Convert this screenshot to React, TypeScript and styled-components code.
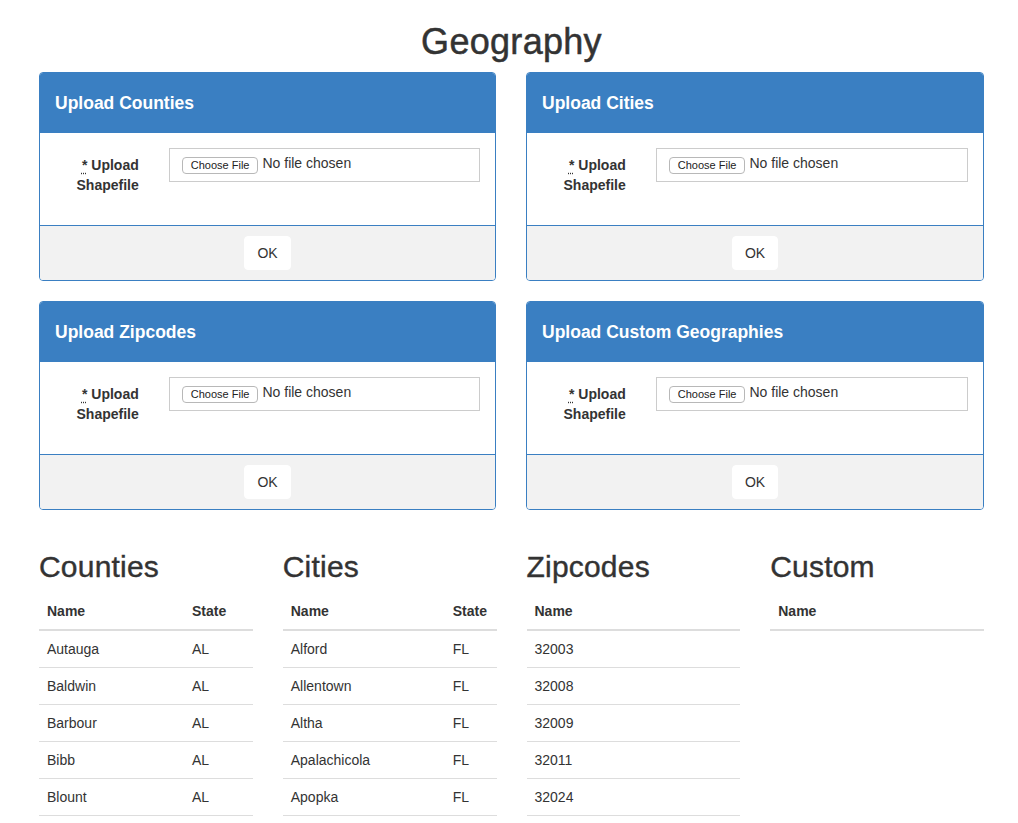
import React from "react";
import styled, { createGlobalStyle } from "styled-components";

const GlobalStyle = createGlobalStyle`
  html, body {
    margin: 0;
    padding: 0;
    background: #ffffff;
  }
  body {
    font-family: "Liberation Sans", Helvetica, Arial, sans-serif;
    font-size: 14px;
    line-height: 20px;
    color: #333333;
  }
  * { box-sizing: border-box; }
`;

const Page = styled.div`
  width: 945px;
  margin-left: 39px;
`;

const Title = styled.h1`
  margin: 22px 0 10px;
  font-size: 36px;
  line-height: 1.1;
  font-weight: 500;
  text-align: center;
  color: #333333;
  -webkit-text-stroke: 0.5px #333333;
  letter-spacing: 0.3px;
`;

const PanelGrid = styled.div`
  display: grid;
  grid-template-columns: 457px 458px;
  column-gap: 30px;
  row-gap: 20px;
  margin-bottom: 20px;
`;

const Panel = styled.section`
  border: 1px solid #3a7fc2;
  border-radius: 4px;
  background: #ffffff;
  overflow: hidden;
`;

const PanelHeading = styled.div`
  height: 60px;
  display: flex;
  align-items: center;
  padding: 0 15px;
  background: #3a7fc2;
  color: #ffffff;
  font-size: 17.5px;
  font-weight: 700;
`;

const PanelBody = styled.div`
  padding: 15px;
`;

const FormRow = styled.div`
  display: grid;
  grid-template-columns: 83.75px 1fr;
  column-gap: 30px;
  align-items: start;
  margin-bottom: 15px;
`;

const FieldLabel = styled.label`
  padding-top: 7px;
  text-align: right;
  font-weight: 700;
  line-height: 20px;
`;

const Required = styled.abbr`
  text-decoration: underline dotted;
  text-underline-offset: 3px;
  cursor: help;
`;

const FileBox = styled.div`
  height: 34px;
  border: 1px solid #cccccc;
  padding: 6px 12px;
  display: flex;
  align-items: flex-start;
  gap: 4px;
  background: #ffffff;
`;

const ChooseButton = styled.span`
  margin-top: 2px;
  height: 17px;
  padding: 0 8px;
  border: 1px solid #b8b8b8;
  border-radius: 4px;
  background: #ffffff;
  font-size: 11px;
  line-height: 15px;
  color: #222222;
  white-space: nowrap;
`;

const FileStatus = styled.span`
  line-height: 16px;
  color: #333333;
  white-space: nowrap;
`;

const PanelFooter = styled.div`
  border-top: 1px solid #3a7fc2;
  background: #f2f2f2;
  padding: 10px 15px;
  display: flex;
  justify-content: center;
`;

const OkButton = styled.button`
  height: 34px;
  padding: 6px 12px;
  border: 1px solid #ffffff;
  border-radius: 4px;
  background: #ffffff;
  font-family: inherit;
  font-size: 14px;
  line-height: 20px;
  color: #333333;
  cursor: pointer;
`;

const TableGrid = styled.div`
  display: grid;
  grid-template-columns: repeat(4, 1fr);
  column-gap: 30px;
`;

const TableColumn = styled.div``;

const SectionTitle = styled.h2`
  margin: 20px 0 10px;
  font-size: 30px;
  line-height: 1.1;
  font-weight: 500;
  color: #333333;
  -webkit-text-stroke: 0.4px #333333;
  letter-spacing: 0.2px;
`;

const Table = styled.table`
  width: 100%;
  border-collapse: collapse;
  border-spacing: 0;
`;

const Col = styled.col<{ $width?: number }>`
  width: ${(p) => (p.$width ? `${p.$width}px` : "auto")};
`;

const Th = styled.th`
  padding: 8px;
  text-align: left;
  font-weight: 700;
  line-height: 20px;
  border-bottom: 2px solid #dddddd;
`;

const Row = styled.tr`
  &:last-child td {
    border-bottom: 1px solid #dddddd;
  }
`;

const Td = styled.td`
  padding: 8px;
  line-height: 20px;
  border-top: 1px solid #dddddd;
`;

const uploads = [
  "Upload Counties",
  "Upload Cities",
  "Upload Zipcodes",
  "Upload Custom Geographies",
];

type TableData = {
  title: string;
  nameWidth?: number;
  hasState: boolean;
  rows: string[][];
};

const tables: TableData[] = [
  {
    title: "Counties",
    nameWidth: 145,
    hasState: true,
    rows: [
      ["Autauga", "AL"],
      ["Baldwin", "AL"],
      ["Barbour", "AL"],
      ["Bibb", "AL"],
      ["Blount", "AL"],
    ],
  },
  {
    title: "Cities",
    nameWidth: 162,
    hasState: true,
    rows: [
      ["Alford", "FL"],
      ["Allentown", "FL"],
      ["Altha", "FL"],
      ["Apalachicola", "FL"],
      ["Apopka", "FL"],
    ],
  },
  {
    title: "Zipcodes",
    hasState: false,
    rows: [["32003"], ["32008"], ["32009"], ["32011"], ["32024"]],
  },
  {
    title: "Custom",
    hasState: false,
    rows: [],
  },
];

function UploadPanel({ title }: { title: string }) {
  return (
    <Panel>
      <PanelHeading>{title}</PanelHeading>
      <PanelBody>
        <FormRow>
          <FieldLabel>
            <Required title="required">*</Required> Upload Shapefile
          </FieldLabel>
          <FileBox>
            <ChooseButton>Choose File</ChooseButton>
            <FileStatus>No file chosen</FileStatus>
          </FileBox>
        </FormRow>
      </PanelBody>
      <PanelFooter>
        <OkButton type="button">OK</OkButton>
      </PanelFooter>
    </Panel>
  );
}

function DataTable({ data }: { data: TableData }) {
  return (
    <TableColumn>
      <SectionTitle>{data.title}</SectionTitle>
      <Table>
        <colgroup>
          <Col $width={data.hasState ? data.nameWidth : undefined} />
          {data.hasState && <Col />}
        </colgroup>
        <thead>
          <tr>
            <Th>Name</Th>
            {data.hasState && <Th>State</Th>}
          </tr>
        </thead>
        <tbody>
          {data.rows.map((row, i) => (
            <Row key={i}>
              {row.map((cell, j) => (
                <Td key={j}>{cell}</Td>
              ))}
            </Row>
          ))}
        </tbody>
      </Table>
    </TableColumn>
  );
}

export default function App() {
  return (
    <>
      <GlobalStyle />
      <Page>
        <Title>Geography</Title>
        <PanelGrid>
          {uploads.map((u) => (
            <UploadPanel key={u} title={u} />
          ))}
        </PanelGrid>
        <TableGrid>
          {tables.map((t) => (
            <DataTable key={t.title} data={t} />
          ))}
        </TableGrid>
      </Page>
    </>
  );
}
